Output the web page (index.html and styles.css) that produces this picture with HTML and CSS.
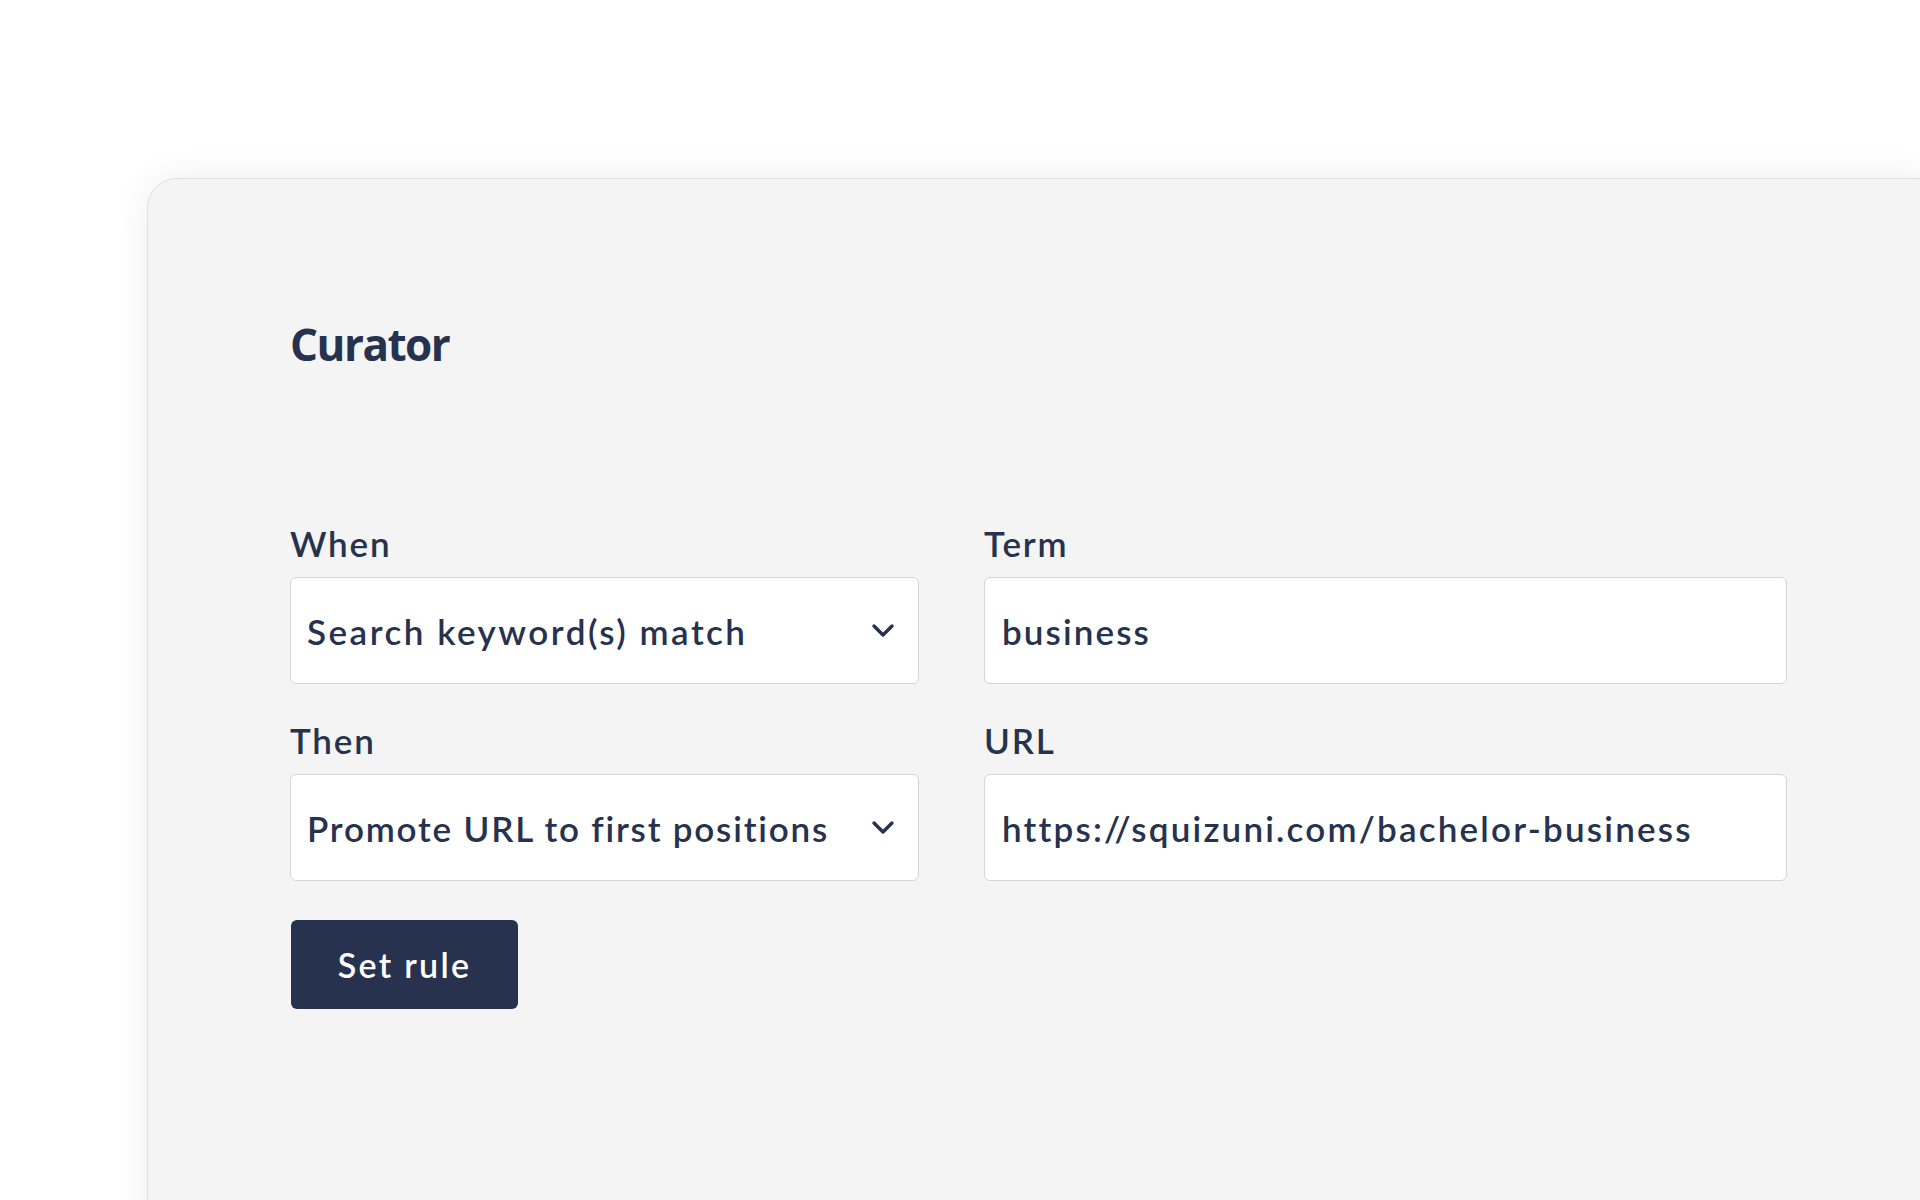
FILE: index.html
```html
<!DOCTYPE html>
<html lang="en">
<head>
<meta charset="utf-8">
<title>Curator</title>
<link rel="stylesheet" href="styles.css">
</head>
<body>
<main class="page">
  <section class="card">
    <h1 class="title">Curator</h1>
    <form class="rule-form">
      <div class="field">
        <label class="label">When</label>
        <div class="select">
          <span class="select-value wide">Search keyword(s) match</span>
          <svg class="chevron" viewBox="0 0 24 15"><path d="M3 3 L12 12 L21 3"/></svg>
        </div>
      </div>
      <div class="field">
        <label class="label">Term</label>
        <input class="input" type="text" value="business">
      </div>
      <div class="field">
        <label class="label">Then</label>
        <div class="select">
          <span class="select-value narrow">Promote URL to first positions</span>
          <svg class="chevron" viewBox="0 0 24 15"><path d="M3 3 L12 12 L21 3"/></svg>
        </div>
      </div>
      <div class="field">
        <label class="label">URL</label>
        <input class="input url" type="text" value="https://squizuni.com/bachelor-business">
      </div>
      <button class="button" type="button">Set rule</button>
    </form>
  </section>
</main>
</body>
</html>
```

FILE: styles.css
```css
html, body {
  margin: 0;
  overflow: hidden;
  background: #ffffff;
}

body {
  font-family: "Lato", "Liberation Sans", sans-serif;
  color: #26324e;
}

.page {
  padding: 178px 0 0 147px;
}

.card {
  box-sizing: border-box;
  width: 1800px;
  min-height: 1100px;
  background: #f4f4f4;
  border: 1px solid #e0e0e0;
  border-radius: 30px;
  box-shadow: 0 0 36px rgba(0, 0, 0, 0.07);
  padding: 135px 0 0 142px;
}

.title {
  font-family: "Open Sans", "Liberation Sans", sans-serif;
  font-weight: 700;
  font-size: 44px;
  line-height: 60px;
  letter-spacing: -1.5px;
  margin: 0 0 148px;
  color: #26324e;
}

.rule-form {
  display: grid;
  grid-template-columns: 629px 803px;
  column-gap: 65px;
  row-gap: 35px;
}

.field {
  display: flex;
  flex-direction: column;
  gap: 13px;
}

.label {
  font-size: 35px;
  line-height: 42px;
  font-weight: 600;
  letter-spacing: 1.8px;
}

.select,
.input {
  box-sizing: border-box;
  height: 107px;
  background: #ffffff;
  border: 1px solid #d5d5d5;
  border-radius: 6px;
  font-family: "Lato", "Liberation Sans", sans-serif;
  font-size: 35px;
  font-weight: 600;
  letter-spacing: 2.1px;
  color: #26324e;
}

.select {
  display: flex;
  align-items: center;
  justify-content: space-between;
  padding: 0 23px 0 16px;
}

.select-value.wide {
  letter-spacing: 2.5px;
}

.select-value.narrow {
  letter-spacing: 1.8px;
}

.input {
  width: 100%;
  padding: 0 17px;
  outline: none;
}

.url {
  letter-spacing: 2.2px;
}

.chevron {
  flex: none;
  width: 24px;
  height: 15px;
  fill: none;
  stroke: #26324e;
  stroke-width: 3.4;
  stroke-linecap: round;
  stroke-linejoin: round;
}

.button {
  justify-self: start;
  margin: 4px 0 0 1px;
  width: 227px;
  height: 89px;
  background: #26324e;
  color: #ffffff;
  border: 0;
  border-radius: 6px;
  font-family: "Lato", "Liberation Sans", sans-serif;
  font-size: 34px;
  font-weight: 600;
  letter-spacing: 2.3px;
}
```
